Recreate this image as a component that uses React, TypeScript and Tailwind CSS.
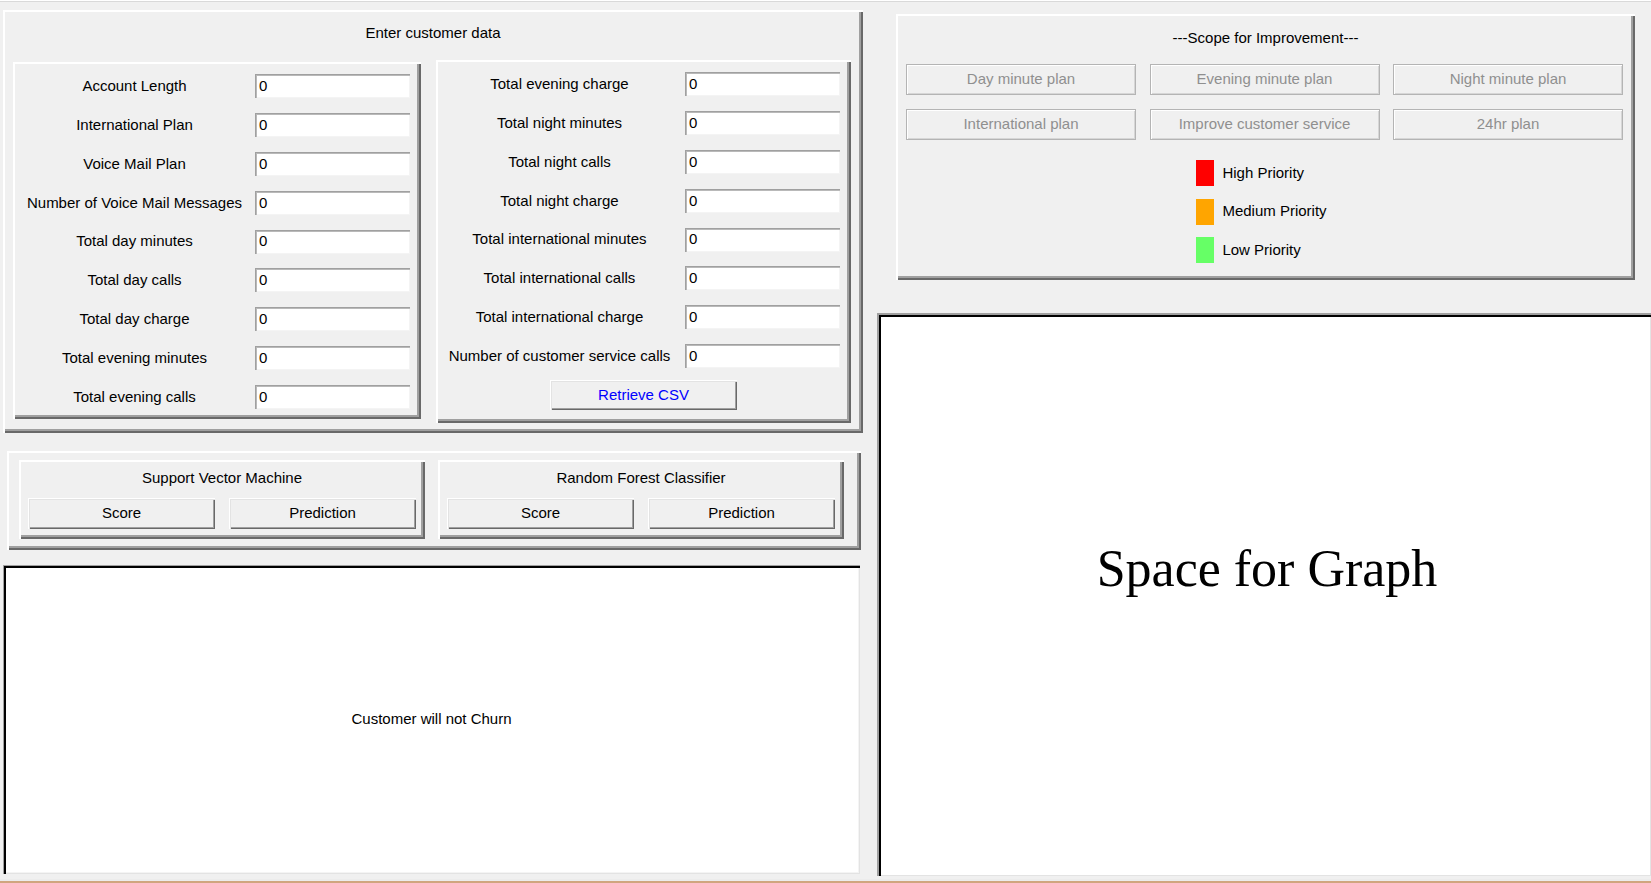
import React from 'react';

const raised =
    'bg-[#f0f0f0] shadow-[inset_2px_2px_0_#ffffff,inset_-2px_-2px_0_#696969,inset_-4px_-4px_0_#a0a0a0]';
const btn =
    'flex items-center justify-center bg-[#f0f0f0] shadow-[inset_1px_1px_0_#ffffff,inset_2px_2px_0_#e3e3e3,inset_-1px_-1px_0_#696969,inset_-2px_-2px_0_#a0a0a0]';
const entry =
    'h-[24px] w-[155px] bg-white pl-[4px] flex items-center shadow-[inset_1px_1px_0_#a0a0a0,inset_2px_2px_0_#b9b9b9,inset_-1px_-1px_0_#f4f4f4]';

const leftFields = [
    'Account Length',
    'International Plan',
    'Voice Mail Plan',
    'Number of Voice Mail Messages',
    'Total day minutes',
    'Total day calls',
    'Total day charge',
    'Total evening minutes',
    'Total evening calls',
];

const rightFields = [
    'Total evening charge',
    'Total night minutes',
    'Total night calls',
    'Total night charge',
    'Total international minutes',
    'Total international calls',
    'Total international charge',
    'Number of customer service calls',
];

const plans = [
    'Day minute plan',
    'Evening minute plan',
    'Night minute plan',
    'International plan',
    'Improve customer service',
    '24hr plan',
];

const legend = [
    { label: 'High Priority', color: 'bg-[#ff0000]' },
    { label: 'Medium Priority', color: 'bg-[#ffa500]' },
    { label: 'Low Priority', color: 'bg-[#66ff66]' },
];

function FieldRow({ label, labelWidth }: { label: string; labelWidth: string }) {
    return (
        <div className="flex h-[38.8px] items-center">
            <div className={`${labelWidth} text-center whitespace-nowrap`}>{label}</div>
            <div className={entry}>0</div>
        </div>
    );
}

function ModelBox({ title }: { title: string }) {
    return (
        <div className={`${raised} h-[79px] w-[406px] px-[9px] pt-[8px]`}>
            <div className="h-[20px] leading-[20px] text-center">{title}</div>
            <div className="mt-[10px] flex justify-between">
                <button className={`${btn} h-[31px] w-[187px]`}>Score</button>
                <button className={`${btn} h-[31px] w-[187px]`}>Prediction</button>
            </div>
        </div>
    );
}

export default function App() {
    return (
        <div className="flex h-[883px] w-[1651px] flex-col overflow-hidden bg-[#f0f0f0] font-['Liberation_Sans',Arial,sans-serif] text-[15px] text-black">
            <div className="h-[2px] border-b border-[#d9d9d9] bg-white" />

            <div className="flex flex-1">
                {/* left column */}
                <div className="w-[877px]">
                    <div className={`${raised} ml-[3px] mt-[8px] h-[423px] w-[860px] pt-[13px]`}>
                        <div className="h-[20px] leading-[20px] text-center">Enter customer data</div>
                        <div className="flex items-start">
                            <div className={`${raised} ml-[10px] mt-[19px] h-[357px] w-[408px] pt-[5px] pl-[1px]`}>
                                {leftFields.map((f) => (
                                    <FieldRow key={f} label={f} labelWidth="w-[241px]" />
                                ))}
                            </div>
                            <div className={`${raised} ml-[15px] mt-[17px] h-[363px] w-[415px] pt-[5px] pl-[2px]`}>
                                {rightFields.map((f) => (
                                    <FieldRow key={f} label={f} labelWidth="w-[247px] pr-[4px]" />
                                ))}
                                <div className="mt-[5px] flex justify-center pr-[2px]">
                                    <button className={`${btn} h-[30px] w-[187px] text-[#0000ff]`}>Retrieve CSV</button>
                                </div>
                            </div>
                        </div>
                    </div>

                    <div className={`${raised} ml-[7px] mt-[18px] flex h-[99px] w-[854px] gap-[13px] pl-[12px] pt-[9px]`}>
                        <ModelBox title="Support Vector Machine" />
                        <ModelBox title="Random Forest Classifier" />
                    </div>

                    <div className="ml-[3px] mt-[15px] flex h-[309px] w-[857px] items-center justify-center bg-white shadow-[inset_1px_1px_0_#a0a0a0,inset_3px_3px_0_#000000,inset_-1px_-1px_0_#e3e3e3,inset_-2px_-2px_0_#f4f4f4]">
                        Customer will not Churn
                    </div>
                </div>

                {/* right column */}
                <div className="flex-1">
                    <div className={`${raised} ml-[19px] mt-[12px] h-[266px] w-[739px] px-[10px] pt-[14px]`}>
                        <div className="h-[20px] leading-[20px] text-center">---Scope for Improvement---</div>
                        <div className="mt-[16px] grid grid-cols-[230px_230px_230px] gap-x-[13.5px] gap-y-[14px]">
                            {plans.map((p) => (
                                <div
                                    key={p}
                                    className="flex h-[31px] items-center justify-center border border-[#b4b4b4] text-[#8f8f8f] shadow-[inset_1px_1px_0_#ffffff,inset_-1px_-1px_0_#d6d6d6]"
                                >
                                    {p}
                                </div>
                            ))}
                        </div>
                        <div className="mt-[20px] flex justify-center pr-[8px]">
                            <div className="flex flex-col gap-[12.5px]">
                                {legend.map((l) => (
                                    <div key={l.label} className="flex h-[26px] items-center gap-[8px]">
                                        <div className={`${l.color} h-[26px] w-[18px]`} />
                                        <span>{l.label}</span>
                                    </div>
                                ))}
                            </div>
                        </div>
                    </div>

                    <div className="mt-[33px] flex h-[563px] justify-center bg-white pl-[6px] pt-[230px] shadow-[inset_2px_2px_0_#a0a0a0,inset_4px_4px_0_#000000,inset_-1px_-1px_0_#e3e3e3]">
                        <div className="font-['Liberation_Serif',serif] text-[52px] leading-none">Space for Graph</div>
                    </div>
                </div>
            </div>

            <div className="h-[4px] border-b-2 border-[#d0a57e] bg-[#ececec]" />
        </div>
    );
}
